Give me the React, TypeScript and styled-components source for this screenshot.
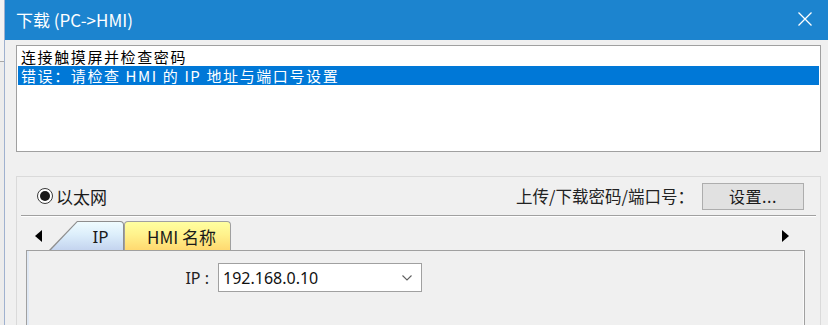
import React from 'react'
import styled, {createGlobalStyle} from 'styled-components'

const GlobalStyle = createGlobalStyle`
    html, body {
        margin: 0;
        padding: 0;
        background: #f0f0f0;
    }
    body {
        font-family: "Noto Sans", "Noto Sans CJK SC", sans-serif;
        color: #1a1a1a;
    }
`

const CJK = `"Noto Sans CJK SC", "Noto Sans", sans-serif`

const Screen = styled.div`
    width: 828px;
    height: 325px;
    display: flex;
    overflow: hidden;
    background: #f0f0f0;
`

const Backdrop = styled.div`
    width: 4px;
    flex: none;
    background: linear-gradient(to bottom, #f3f3f3 0 61px, #a8a8a8 61px 62px, #ececec 62px);
`

const Dialog = styled.div`
    flex: 1;
    display: flex;
    flex-direction: column;
    border-left: 1px solid #9fb1cf;
`

const TitleBar = styled.div`
    height: 38px;
    flex: none;
    background: #1c84cf;
    color: #fff;
    display: flex;
    align-items: center;
    justify-content: space-between;
    padding: 0 15px 2px 11px;
    font-size: 17px;
    font-family: ${CJK};
`

const CloseIcon = () => (
    <svg width="16" height="16" viewBox="0 0 16 16">
        <path d="M1.5 1.5 L14.5 14.5 M14.5 1.5 L1.5 14.5" stroke="#fff" strokeWidth="1.3" fill="none"/>
    </svg>
)

const Body = styled.div`
    flex: 1;
    display: flex;
    flex-direction: column;
    padding: 5px 7px 0 11px;
`

const ListBox = styled.div`
    height: 103px;
    flex: none;
    background: #fff;
    border: 1px solid #a0a0a0;
    padding: 1px;
`

const ListItem = styled.div<{ $selected?: boolean }>`
    height: 19px;
    line-height: 19px;
    padding-left: 3px;
    overflow: hidden;
    font-family: ${CJK};
    font-size: 15px;
    letter-spacing: 1.6px;
    white-space: nowrap;
    background: ${p => p.$selected ? '#0078d7' : 'transparent'};
    color: ${p => p.$selected ? '#fff' : '#000'};
`

const GroupBox = styled.div`
    flex: 1;
    margin-top: 24px;
    border: 1px solid #dadada;
    border-bottom: none;
    display: flex;
    flex-direction: column;
`

const TopRow = styled.div`
    height: 38px;
    flex: none;
    display: flex;
    align-items: center;
    justify-content: space-between;
    padding: 0 16px 0 20px;
`

const RadioLabel = styled.label`
    display: flex;
    align-items: center;
    gap: 3px;
    font-family: ${CJK};
    font-size: 17px;
`

const RadioDot = styled.span`
    width: 14px;
    height: 14px;
    border-radius: 50%;
    border: 1.5px solid #3a3a3a;
    background: #fff;
    display: flex;
    align-items: center;
    justify-content: center;

    &::after {
        content: "";
        width: 10px;
        height: 10px;
        border-radius: 50%;
        background: #1a1a1a;
    }
`

const PortRow = styled.div`
    display: flex;
    align-items: center;
    gap: 8px;
    font-family: ${CJK};
    font-size: 16.5px;
    color: #222;
`

const Button = styled.button`
    width: 102px;
    height: 27px;
    background: #e1e1e1;
    border: 1px solid #adadad;
    font-family: ${CJK};
    font-size: 16px;
    color: #1a1a1a;
    padding: 0;
    letter-spacing: 0.5px;
`

const Separator = styled.div`
    margin: 0 4px;
    border-top: 1px solid #a0a0a0;
    border-bottom: 1px solid #fff;
`

const TabRow = styled.div`
    height: 33px;
    flex: none;
    display: flex;
    align-items: flex-end;
    padding: 0 31px 0 18px;
`

const Arrow = styled.span<{ $dir: 'left' | 'right' }>`
    align-self: center;
    margin-top: 4px;
    width: 0;
    height: 0;
    border-top: 6px solid transparent;
    border-bottom: 6px solid transparent;
    ${p => p.$dir === 'left'
        ? 'border-right: 7px solid #000; margin-right: 7px;'
        : 'border-left: 7px solid #000; margin-left: auto;'}
`

const SlantTab = styled.div`
    width: 75px;
    height: 29px;
    box-sizing: border-box;
    padding: 1px 1px 0 1px;
    background: #8e8e8e;
    border-top-right-radius: 4px;
    clip-path: polygon(0 100%, 28px 0, 100% 0, 100% 100%);
    display: flex;
`

const SlantFace = styled.div`
    flex: 1;
    border-top-right-radius: 3px;
    background: linear-gradient(to bottom, #effcff 0%, #dceefb 45%, #c4d4ef 100%);
    clip-path: polygon(1px 100%, 27.5px 0, 100% 0, 100% 100%);
    display: flex;
    align-items: center;
    justify-content: center;
    padding-left: 28px;
    font-size: 17px;
    color: #1a1a1a;
`

const Tab = styled.div`
    width: 107px;
    height: 29px;
    box-sizing: border-box;
    border: 1px solid #a0a0a0;
    border-bottom: none;
    border-radius: 4px 4px 0 0;
    background: linear-gradient(to bottom, #ffffa0 0%, #fff28c 45%, #ffd970 100%);
    display: flex;
    align-items: center;
    justify-content: center;
    padding-left: 8px;
    font-family: ${CJK};
    font-size: 17px;
    color: #1a1a1a;
`

const Panel = styled.div`
    flex: 1;
    margin: 0 15px 0 9px;
    border: 1px solid #a0a0a0;
    border-bottom: none;
    box-shadow: inset 2px 0 0 #dfe8f4, inset -1px 0 0 #fafafa;
    background: #f0f0f0;
    padding-top: 12px;
`

const FieldRow = styled.div`
    display: flex;
    align-items: center;
    gap: 9px;
`

const FieldLabel = styled.span`
    width: 182px;
    text-align: right;
    font-size: 16px;
    color: #222;
`

const Combo = styled.div`
    width: 204px;
    height: 29px;
    box-sizing: border-box;
    background: #fff;
    border: 1px solid #a0a0a0;
    display: flex;
    align-items: center;
    justify-content: space-between;
    padding: 0 9px 0 4px;
    font-size: 16px;
    color: #111;
`

const Chevron = () => (
    <svg width="10" height="6" viewBox="0 0 10 6">
        <path d="M0.5 0.5 L5 5 L9.5 0.5" stroke="#606060" strokeWidth="1.1" fill="none"/>
    </svg>
)

const App = () => {
    return (
        <>
            <GlobalStyle/>
            <Screen>
                <Backdrop/>
                <Dialog>
                    <TitleBar>
                        <span>下载 (PC-&gt;HMI)</span>
                        <CloseIcon/>
                    </TitleBar>
                    <Body>
                        <ListBox>
                            <ListItem>连接触摸屏并检查密码</ListItem>
                            <ListItem $selected>错误：请检查 HMI 的 IP 地址与端口号设置</ListItem>
                        </ListBox>
                        <GroupBox>
                            <TopRow>
                                <RadioLabel>
                                    <RadioDot/>
                                    以太网
                                </RadioLabel>
                                <PortRow>
                                    上传/下载密码/端口号：
                                    <Button>设置...</Button>
                                </PortRow>
                            </TopRow>
                            <Separator/>
                            <TabRow>
                                <Arrow $dir="left"/>
                                <SlantTab>
                                    <SlantFace>IP</SlantFace>
                                </SlantTab>
                                <Tab>HMI 名称</Tab>
                                <Arrow $dir="right"/>
                            </TabRow>
                            <Panel>
                                <FieldRow>
                                    <FieldLabel>IP :</FieldLabel>
                                    <Combo>
                                        192.168.0.10
                                        <Chevron/>
                                    </Combo>
                                </FieldRow>
                            </Panel>
                        </GroupBox>
                    </Body>
                </Dialog>
            </Screen>
        </>
    )
}

export default App
